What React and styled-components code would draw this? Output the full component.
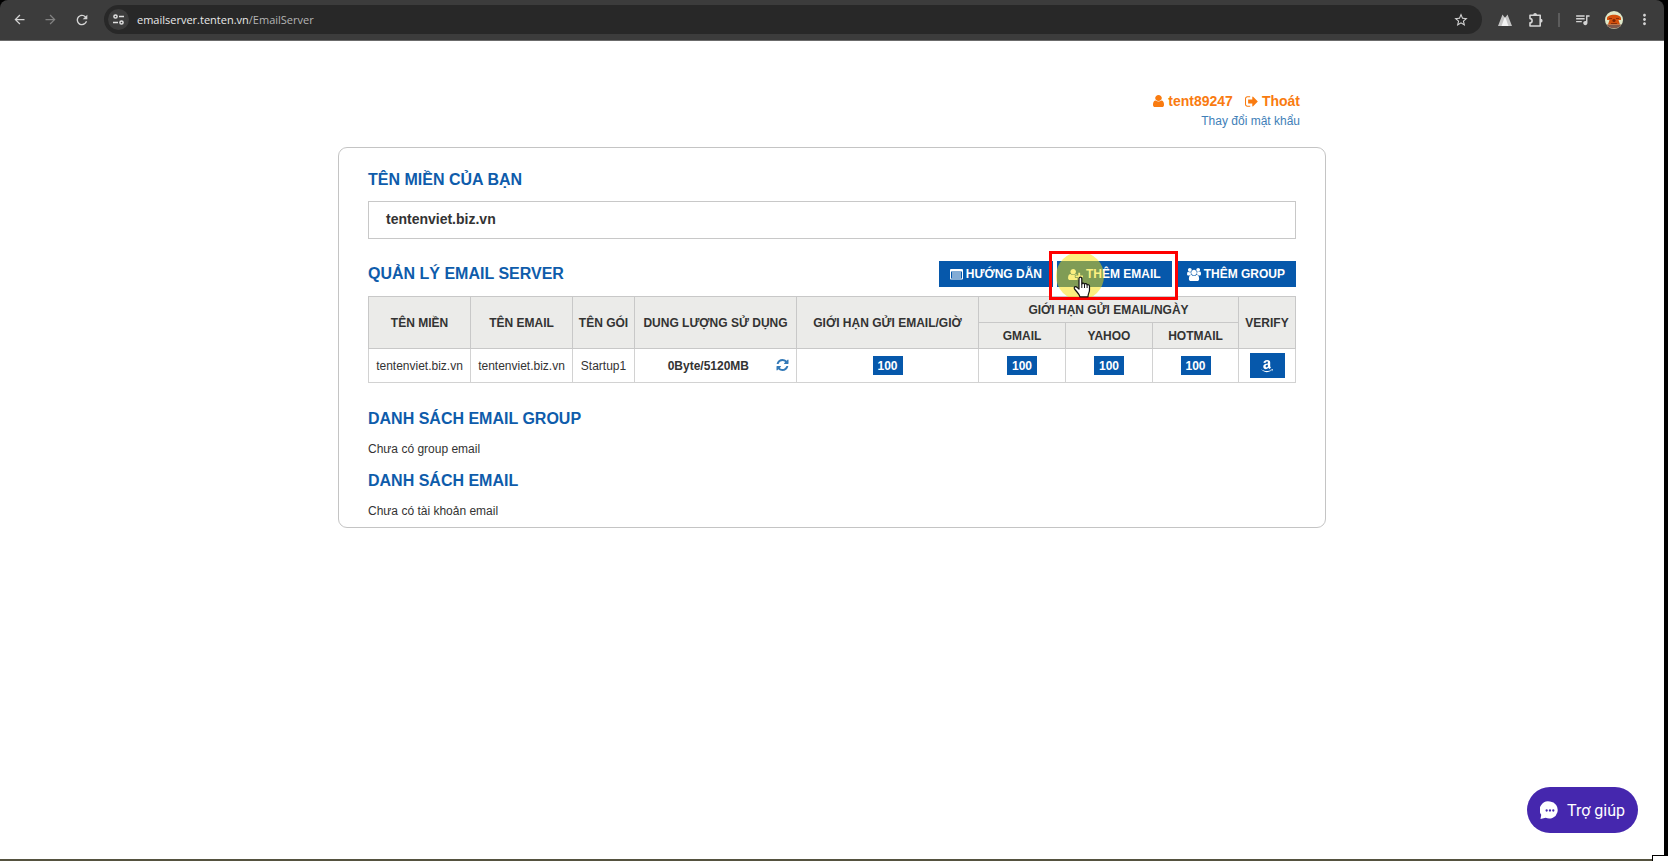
import React from "react";
import styled, { createGlobalStyle } from "styled-components";
import { FaAmazon } from "react-icons/fa";
import {
	MdArrowBack,
	MdArrowForward,
	MdRefresh,
	MdStarBorder,
	MdQueueMusic,
	MdMoreVert,
} from "react-icons/md";

const GlobalStyle = createGlobalStyle`
	* {
		box-sizing: border-box;
	}
	body {
		margin: 0;
		background: #000;
		color: #333;
		font-family: "Liberation Sans", Arial, sans-serif;
		font-size: 12px;
		line-height: 16px;
	}
	h2, p {
		margin: 0;
	}
	a {
		text-decoration: none;
	}
	button {
		border: none;
		padding: 0;
		font-family: inherit;
		cursor: pointer;
	}
	svg {
		display: block;
		flex: none;
	}
`;

const Browser = styled.div`
	display: flex;
	flex-direction: column;
	min-height: 100vh;
	padding-right: 4px;
	border-bottom: 2px solid #55523f;
`;

const Toolbar = styled.header`
	display: flex;
	align-items: center;
	height: 41px;
	padding: 0 4px 1px 10px;
	background: #3c3c3c;
	border-bottom: 1px solid #6b6b6b;
	border-radius: 8px 8px 0 0;
`;

const ToolButton = styled.button`
	display: flex;
	align-items: center;
	justify-content: center;
	width: 31px;
	height: 28px;
	background: none;
	color: ${({ $dim }) => ($dim ? "#828282" : "#d4d4d4")};
`;

const NavButtons = styled.nav`
	display: flex;
	margin-left: -6px;
`;

const AddressBar = styled.div`
	display: flex;
	flex: 1;
	align-items: center;
	height: 29px;
	margin: 0 7px;
	padding: 0 6px 0 4px;
	background: #282828;
	border-radius: 15px;
`;

const SiteInfo = styled.button`
	display: flex;
	align-items: center;
	justify-content: center;
	width: 21px;
	height: 21px;
	border-radius: 50%;
	background: #3c3c3c;
	color: #e0e0e0;
`;

const Url = styled.div`
	flex: 1;
	margin-left: 8px;
	color: #e8e8e8;
	font-family: "Open Sans", "Noto Sans", sans-serif;
	font-size: 11px;

	span {
		color: #b4b4b4;
	}
`;

const Separator = styled.span`
	width: 2px;
	height: 14px;
	margin: 0 7px;
	background: #5c5c5c;
`;

const Page = styled.div`
	display: flex;
	flex: 1;
	flex-direction: column;
	background: #fff;
`;

const Container = styled.main`
	width: 100%;
	max-width: 988px;
	margin: 0 auto;
	padding-top: 51px;
`;

const Account = styled.div`
	display: flex;
	flex-direction: column;
	align-items: flex-end;
	gap: 3px;
	padding-right: 26px;
`;

const AccountLinks = styled.div`
	display: flex;
	gap: 12px;
`;

const AccountLink = styled.a`
	display: flex;
	align-items: center;
	gap: 4px;
	color: #f97b10;
	font-size: 14px;
	font-weight: bold;
	line-height: 18px;
`;

const PasswordLink = styled.a`
	color: #4180b8;
	font-size: 12px;
`;

const Card = styled.section`
	margin-top: 18px;
	padding: 22px 29px 8px;
	border: 1px solid #c4c4c4;
	border-radius: 9px;
`;

const Title = styled.h2`
	color: #0e5cab;
	font-size: 16px;
	font-weight: bold;
	line-height: 20px;
`;

const DomainBox = styled.div`
	margin-top: 11px;
	padding: 8px 17px 10px;
	border: 1px solid #c8c8c8;
	color: #333;
	font-size: 14px;
	font-weight: bold;
	line-height: 18px;
`;

const TitleRow = styled.div`
	display: flex;
	align-items: center;
	justify-content: space-between;
	margin: 22px 0 9px;
`;

const Actions = styled.div`
	display: flex;
	gap: 4px;
`;

const ActionButton = styled.button`
	display: flex;
	align-items: center;
	gap: 3px;
	height: 26px;
	padding: 0 11px;
	background: #0658ab;
	color: #fff;
	font-size: 12px;
	font-weight: bold;
`;

const Highlighted = styled.div`
	position: relative;
`;

const ClickSpot = styled.span`
	position: absolute;
	top: -9px;
	left: -1px;
	width: 48px;
	height: 48px;
	border-radius: 50%;
	background: rgba(250, 224, 0, 0.5);
	pointer-events: none;
`;

const HighlightFrame = styled.span`
	position: absolute;
	inset: -10px -6px -13px -8px;
	border: 3px solid #fe0000;
	pointer-events: none;
`;

const Pointer = styled.svg`
	position: absolute;
	top: 15px;
	left: 16px;
	pointer-events: none;
`;

const Table = styled.table`
	width: 100%;
	table-layout: fixed;
	border-collapse: collapse;
	text-align: center;
`;

const Col = styled.col`
	width: ${({ $width }) => ($width ? `${$width}px` : "auto")};
`;

const HeadCell = styled.th`
	height: 26px;
	padding: 0;
	background: #ebebe9;
	border: 1px solid #c8c8c8;
	white-space: nowrap;
`;

const Cell = styled.td`
	height: 34px;
	padding: 0;
	border: 1px solid #d2d2d2;
	white-space: nowrap;
`;

const Usage = styled.div`
	display: flex;
	align-items: center;
	justify-content: flex-end;
	gap: 27px;
	padding-right: 7px;
	font-weight: bold;
`;

const RefreshButton = styled.button`
	background: none;
	color: #3379b7;
`;

const Quota = styled.button`
	width: 30px;
	height: 19px;
	background: #0658ab;
	color: #fff;
	font-size: 12px;
	font-weight: bold;
	vertical-align: middle;
`;

const VerifyButton = styled.button`
	display: flex;
	align-items: center;
	justify-content: center;
	width: 35px;
	height: 25px;
	margin: 0 auto;
	background: #0658ab;
	color: #fff;
`;

const ListSection = styled.div`
	margin-top: ${({ $first }) => ($first ? "26px" : "14px")};

	p {
		margin-top: 12px;
	}
`;

const HelpButton = styled.button`
	position: fixed;
	right: 30px;
	bottom: 28px;
	display: flex;
	align-items: center;
	gap: 8px;
	height: 46px;
	padding: 0 13px;
	border-radius: 23px;
	background: #4527ae;
	color: #fff;
	font-family: Roboto, sans-serif;
	font-size: 16px;
`;

const CornerWidget = styled.span`
	position: fixed;
	right: 0;
	bottom: 0;
	width: 16px;
	height: 6px;
	background: #fff;
	border: 1px solid #000;
	border-width: 1px 0 0 1px;
`;

const UserIcon = () => (
	<svg width="11" height="12" viewBox="256 128 1280 1536" fill="currentColor" preserveAspectRatio="none">
		<path d="M1536 1399q0 109-62.5 187t-150.5 78h-854q-88 0-150.5-78t-62.5-187q0-85 8.5-160.5t31.5-152 58.5-131 94-89 134.5-34.5q131 128 313 128t313-128q76 0 134.5 34.5t94 89 58.5 131 31.5 152 8.5 160.5zm-256-887q0 159-112.5 271.5t-271.5 112.5-271.5-112.5-112.5-271.5 112.5-271.5 271.5-112.5 271.5 112.5 112.5 271.5z" />
	</svg>
);

const SignOutIcon = () => (
	<svg width="13" height="13" viewBox="64 128 1600 1536" fill="currentColor">
		<path d="M704 1440q0 4 1 20t.5 26.5-3 23.5-10 19.5-20.5 6.5h-320q-119 0-203.5-84.5t-84.5-203.5v-704q0-119 84.5-203.5t203.5-84.5h320q13 0 22.5 9.5t9.5 22.5q0 4 1 20t.5 26.5-3 23.5-10 19.5-20.5 6.5h-320q-66 0-113 47t-47 113v704q0 66 47 113t113 47h312l11.5 1 11.5 3 8 5.5 7 9 2 13.5zm928-544q0 26-19 45l-544 544q-19 19-45 19t-45-19-19-45v-288h-448q-26 0-45-19t-19-45v-384q0-26 19-45t45-19h448v-288q0-26 19-45t45-19 45 19l544 544q19 19 19 45z" />
	</svg>
);

const ListIcon = () => (
	<svg width="13" height="11" viewBox="0 0 13 11" fill="currentColor">
		<path
			fillRule="evenodd"
			d="M1 0h11a1 1 0 0 1 1 1v8.500a1 1 0 0 1-1 1h-11a1 1 0 0 1-1-1v-8.500a1 1 0 0 1 1-1zM1 2.500v7h11v-7z"
		/>
		<path d="M2 3.500h9v1h-9zM2 5.500h9v1h-9zM2 7.500h9v1h-9z" />
	</svg>
);

const UserPlusIcon = () => (
	<svg width="15" height="13" viewBox="0 0 2048 1792" fill="currentColor">
		<path d="M704 896q-159 0-271.5-112.5t-112.5-271.5 112.5-271.5 271.5-112.5 271.5 112.5 112.5 271.5-112.5 271.5-271.5 112.5zm960 128h352q13 0 22.5 9.5t9.5 22.5v192q0 13-9.5 22.5t-22.5 9.5h-352v352q0 13-9.5 22.5t-22.5 9.5h-192q-13 0-22.5-9.5t-9.5-22.5v-352h-352q-13 0-22.5-9.5t-9.5-22.5v-192q0-13 9.5-22.5t22.5-9.5h352v-352q0-13 9.5-22.5t22.5-9.5h192q13 0 22.5 9.5t9.5 22.5v352zm-736 224q0 52 38 90t90 38h256v238q-68 50-171 50h-874q-121 0-194-69t-73-190q0-53 3.5-103.5t14-109 26.5-108.5 43-97.5 62-81 85.5-53.5 111.5-20q19 0 39 17 79 61 154.5 91.5t164.5 30.5 164.5-30.5 154.5-91.5q20-17 39-17 132 0 217 96h-223q-52 0-90 38t-38 90v192z" />
	</svg>
);

const UsersIcon = () => (
	<svg width="14" height="13" viewBox="64 0 1920 1792" fill="currentColor">
		<path d="M657 896q-162 5-265 128h-134q-82 0-138-40.5t-56-118.5q0-353 124-353 6 0 43.5 21t97.5 42.5 119 21.5q67 0 133-23-5 37-5 66 0 159 90 294zm1071 637q0 120-73 189.5t-194 69.5h-874q-121 0-194-69.5t-73-189.5q0-53 3.5-103.5t14-109 26.5-108.5 43-97.5 62-81 85.5-53.5 111.5-20q10 0 43 21.5t73 48 107 48 135 21.5 135-21.5 107-48 73-48 43-21.5q61 0 111.5 20t85.5 53.5 62 81 43 97.5 26.5 108.5 14 109 3.5 103.5zm-1024-1277q0 106-75 181t-181 75-181-75-75-181 75-181 181-75 181 75 75 181zm704 384q0 159-112.5 271.5t-271.5 112.5-271.5-112.5-112.5-271.5 112.5-271.5 271.5-112.5 271.5 112.5 112.5 271.5zm576 225q0 78-56 118.5t-138 40.5h-134q-103-123-265-128 90-135 90-294 0-29-5-66 66 23 133 23 59 0 119-21.5t97.5-42.5 43.5-21q124 0 124 353zm-128-609q0 106-75 181t-181 75-181-75-75-181 75-181 181-75 181 75 75 181z" />
	</svg>
);

const RefreshIcon = () => (
	<svg width="13" height="14" viewBox="0 0 1536 1792" fill="currentColor">
		<path d="M1511 928q0 5-1 7-64 268-268 434.5t-478 166.5q-146 0-282.5-55t-243.5-157l-129 129q-19 19-45 19t-45-19-19-45v-448q0-26 19-45t45-19h448q26 0 45 19t19 45-19 45l-137 137q71 66 161 102t187 36q134 0 250-65t186-179q11-17 53-117 8-23 30-23h192q13 0 22.5 9.5t9.5 22.5zm25-800v448q0 26-19 45t-45 19h-448q-26 0-45-19t-19-45 19-45l138-138q-148-137-349-137-134 0-250 65t-186 179q-11 17-53 117-8 23-30 23h-199q-13 0-22.5-9.5t-9.5-22.5v-7q65-268 270-434.5t480-166.5q146 0 284 55.5t245 156.5l130-129q19-19 45-19t45 19 19 45z" />
	</svg>
);

const TuneIcon = () => (
	<svg width="13" height="13" viewBox="0 0 13 13" fill="none" stroke="currentColor" strokeWidth="1.5">
		<circle cx="3.5" cy="3.5" r="1.6" />
		<path d="M7 3.5h5M1 9.5h5" />
		<circle cx="9.5" cy="9.5" r="1.6" />
	</svg>
);

const PeaksIcon = () => (
	<svg width="14" height="12" viewBox="0 0 14 12">
		<path d="M0 12L4.500 0.500L7 4L9.500 0.500L14 12z" fill="#c4c4c4" />
		<path d="M3.500 12L7 2.500L10.500 12z" fill="#f2f2f2" />
	</svg>
);

const ExtensionIcon = () => (
	<svg width="16" height="16" viewBox="0 0 16 16">
		<path
			d="M2 3.300h10.200v10.700H2v-3.200a2 2 0 0 0 0-4.200z"
			fill="none"
			stroke="currentColor"
			strokeWidth="1.600"
			strokeLinejoin="round"
		/>
		<path d="M5.200 3a1.900 1.900 0 0 1 3.800 0zM12.700 6.800a1.900 1.900 0 0 1 0 3.800z" fill="currentColor" />
	</svg>
);

const Avatar = () => (
	<svg width="18" height="18" viewBox="0 0 18 18">
		<circle cx="9" cy="9" r="9" fill="#dfe8c9" />
		<path d="M1.500 13.500h15a9 9 0 0 1-15 0z" fill="#80584a" />
		<path
			d="M2 7.500C2 2.500 16 2.500 16 7.500v1.500h-2.500l1.500 4.500h-12l1.500-4.500h-2.500z"
			fill="#d4500c"
		/>
		<circle cx="9" cy="9.500" r="1.600" fill="#7c2605" />
		<path d="M4 7.500h3M11 7.500h3M6 12.500h6" stroke="#8a2e08" />
	</svg>
);

const ChatIcon = () => (
	<svg width="19" height="19" viewBox="0 0 20 20">
		<path d="M10.500 0.500a9 9 0 1 1-4.500 17.200L0.500 19l.8-4.500A9 9 0 0 1 10.500 0.500z" fill="#fff" />
		<g fill="#4527ae">
			<circle cx="7" cy="10" r="1.200" />
			<circle cx="10.500" cy="10" r="1.200" />
			<circle cx="14" cy="10" r="1.200" />
		</g>
	</svg>
);

const HandPointer = () => (
	<Pointer width="18" height="22" viewBox="0 0 18 22">
		<path
			d="M6 13V2.800C6 0.600 8.800 0.600 8.800 2.800V8c.3-1.300 2.500-1.200 2.700.3.500-1 2.400-.8 2.600.7.700-.8 2.400-.4 2.400 1.300V14c0 2.500-1.500 3.500-1.500 6.800H7C6.500 18 3.600 16 1.500 12.800 0.500 11 2.600 10 4 11.300z"
			fill="#fff"
			stroke="#111"
			strokeWidth="1.200"
			strokeLinejoin="round"
		/>
		<path d="M8.800 8v4M11.500 8.500V12M14.100 9.200V12" stroke="#111" />
	</Pointer>
);

const columns = [102, 102, 62, 162, null, 87, 87, 86, 57];

const servers = [
	{
		domain: "tentenviet.biz.vn",
		email: "tentenviet.biz.vn",
		plan: "Startup1",
		usage: "0Byte/5120MB",
		limits: [100, 100, 100, 100],
	},
];

export default function App() {
	return (
		<>
			<GlobalStyle />
			<Browser>
				<Toolbar>
					<NavButtons>
						<ToolButton aria-label="Back">
							<MdArrowBack size={15} />
						</ToolButton>
						<ToolButton aria-label="Forward" $dim>
							<MdArrowForward size={15} />
						</ToolButton>
						<ToolButton aria-label="Reload">
							<MdRefresh size={16} />
						</ToolButton>
					</NavButtons>
					<AddressBar>
						<SiteInfo aria-label="Site information">
							<TuneIcon />
						</SiteInfo>
						<Url>
							emailserver.tenten.vn<span>/EmailServer</span>
						</Url>
						<ToolButton aria-label="Bookmark">
							<MdStarBorder size={16} />
						</ToolButton>
					</AddressBar>
					<ToolButton aria-label="Peaks">
						<PeaksIcon />
					</ToolButton>
					<ToolButton aria-label="Extensions">
						<ExtensionIcon />
					</ToolButton>
					<Separator />
					<ToolButton aria-label="Media">
						<MdQueueMusic size={17} />
					</ToolButton>
					<ToolButton aria-label="Profile">
						<Avatar />
					</ToolButton>
					<ToolButton aria-label="Menu">
						<MdMoreVert size={17} />
					</ToolButton>
				</Toolbar>

				<Page>
					<Container>
						<Account>
							<AccountLinks>
								<AccountLink href="#account">
									<UserIcon />
									tent89247
								</AccountLink>
								<AccountLink href="#logout">
									<SignOutIcon />
									Thoát
								</AccountLink>
							</AccountLinks>
							<PasswordLink href="#password">Thay đổi mật khẩu</PasswordLink>
						</Account>

						<Card>
							<Title>TÊN MIỀN CỦA BẠN</Title>
							<DomainBox>tentenviet.biz.vn</DomainBox>

							<TitleRow>
								<Title>QUẢN LÝ EMAIL SERVER</Title>
								<Actions>
									<ActionButton>
										<ListIcon />
										HƯỚNG DẪN
									</ActionButton>
									<Highlighted>
										<ActionButton>
											<UserPlusIcon />
											THÊM EMAIL
										</ActionButton>
										<ClickSpot />
										<HighlightFrame />
										<HandPointer />
									</Highlighted>
									<ActionButton>
										<UsersIcon />
										THÊM GROUP
									</ActionButton>
								</Actions>
							</TitleRow>

							<Table>
								<colgroup>
									{columns.map((width, key) => (
										<Col key={key} $width={width} />
									))}
								</colgroup>
								<thead>
									<tr>
										<HeadCell rowSpan={2}>TÊN MIỀN</HeadCell>
										<HeadCell rowSpan={2}>TÊN EMAIL</HeadCell>
										<HeadCell rowSpan={2}>TÊN GÓI</HeadCell>
										<HeadCell rowSpan={2}>DUNG LƯỢNG SỬ DỤNG</HeadCell>
										<HeadCell rowSpan={2}>GIỚI HẠN GỬI EMAIL/GIỜ</HeadCell>
										<HeadCell colSpan={3}>GIỚI HẠN GỬI EMAIL/NGÀY</HeadCell>
										<HeadCell rowSpan={2}>VERIFY</HeadCell>
									</tr>
									<tr>
										<HeadCell>GMAIL</HeadCell>
										<HeadCell>YAHOO</HeadCell>
										<HeadCell>HOTMAIL</HeadCell>
									</tr>
								</thead>
								<tbody>
									{servers.map((val) => (
										<tr key={val.domain}>
											<Cell>{val.domain}</Cell>
											<Cell>{val.email}</Cell>
											<Cell>{val.plan}</Cell>
											<Cell>
												<Usage>
													{val.usage}
													<RefreshButton aria-label="Refresh">
														<RefreshIcon />
													</RefreshButton>
												</Usage>
											</Cell>
											{val.limits.map((limit, key) => (
												<Cell key={key}>
													<Quota>{limit}</Quota>
												</Cell>
											))}
											<Cell>
												<VerifyButton aria-label="Verify">
													<FaAmazon size={14} />
												</VerifyButton>
											</Cell>
										</tr>
									))}
								</tbody>
							</Table>

							<ListSection $first>
								<Title>DANH SÁCH EMAIL GROUP</Title>
								<p>Chưa có group email</p>
							</ListSection>
							<ListSection>
								<Title>DANH SÁCH EMAIL</Title>
								<p>Chưa có tài khoản email</p>
							</ListSection>
						</Card>
					</Container>
				</Page>
			</Browser>
			<HelpButton>
				<ChatIcon />
				Trợ giúp
			</HelpButton>
			<CornerWidget />
		</>
	);
}
